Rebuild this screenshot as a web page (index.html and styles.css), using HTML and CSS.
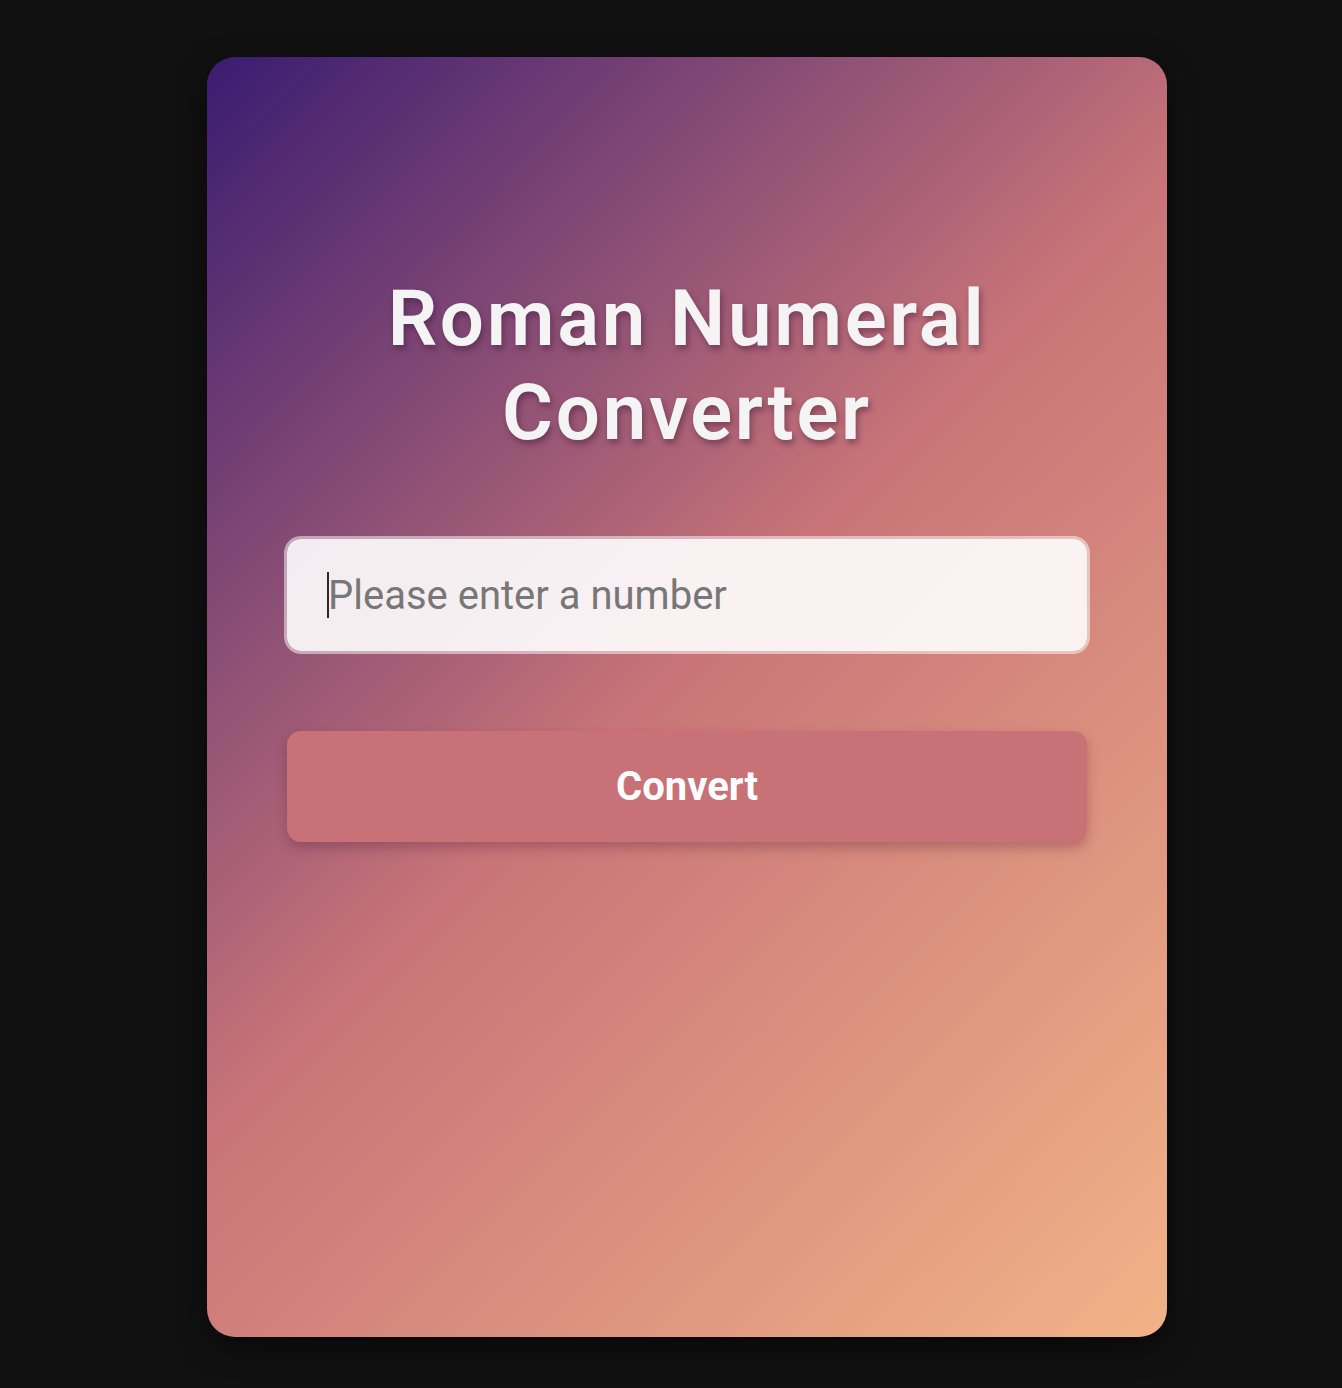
FILE: index.html
```html
<!DOCTYPE html>
<html lang="en">
<head>
<meta charset="utf-8">
<title>Roman Numeral Converter</title>
<link rel="stylesheet" href="styles.css">
</head>
<body>
<main class="card">
  <h1 class="title">Roman Numeral Converter</h1>
  <form class="form" onsubmit="return false">
    <div class="field">
      <input class="number-input" type="number" placeholder="Please enter a number" autofocus>
      <span class="caret"></span>
    </div>
    <button class="convert-btn" type="submit">Convert</button>
  </form>
</main>
</body>
</html>
```
FILE: styles.css
```css
* { box-sizing: border-box; }
html, body { margin: 0; padding: 0; }
body {
  background: #111111;
  font-family: Roboto, "Noto Sans", sans-serif;
  min-height: 1388px;
  padding: 57px 0 0 32px;
  overflow: hidden;
}
.card {
  width: 960px;
  height: 1280px;
  margin: 0 auto;
  border-radius: 28px;
  background: linear-gradient(135deg, #3a1c71 0%, #c87478 48%, #f2b387 100%);
  box-shadow: 0 10px 30px rgba(0,0,0,0.55);
  padding: 215px 80px 0;
  display: flex;
  flex-direction: column;
  align-items: center;
}
.title {
  margin: 0;
  font-size: 78px;
  line-height: 1.2;
  font-weight: 600;
  letter-spacing: 2.7px;
  text-align: center;
  color: #f4f4f4;
  text-shadow: 2px 4px 6px rgba(60, 20, 50, 0.45);
}
.form {
  width: 800px;
  margin-top: 77px;
  display: flex;
  flex-direction: column;
  align-items: center;
  gap: 77px;
}
.field {
  position: relative;
  width: 806px;
}
.number-input {
  display: block;
  width: 806px;
  height: 118px;
  border: 3px solid rgba(255, 255, 255, 0.5);
  border-radius: 17px;
  background: rgba(255, 255, 255, 0.9);
  background-clip: padding-box;
  padding: 0 41px;
  font-family: Roboto, sans-serif;
  font-size: 40px;
  color: #333;
  caret-color: transparent;
  outline: none;
}
.number-input::placeholder { color: #777777; }
.number-input::-webkit-outer-spin-button,
.number-input::-webkit-inner-spin-button { -webkit-appearance: none; margin: 0; }
.caret {
  position: absolute;
  left: 43px;
  top: 36px;
  width: 2px;
  height: 46px;
  background: #2a2a2a;
}
.convert-btn {
  width: 800px;
  height: 111px;
  border: none;
  border-radius: 14px;
  background: #c87176;
  color: #ffffff;
  font-family: Roboto, sans-serif;
  font-size: 40px;
  font-weight: 700;
  box-shadow: 0 6px 12px rgba(80, 30, 50, 0.3);
  cursor: pointer;
}
```
